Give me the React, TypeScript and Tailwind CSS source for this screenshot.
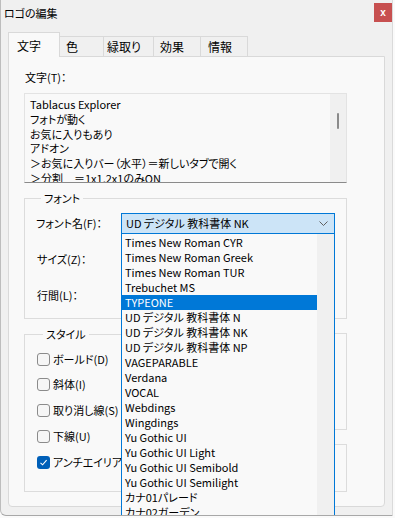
import React from "react";

const items = [
  "Times New Roman CYR",
  "Times New Roman Greek",
  "Times New Roman TUR",
  "Trebuchet MS",
  "TYPEONE",
  "UD デジタル 教科書体 N",
  "UD デジタル 教科書体 NK",
  "UD デジタル 教科書体 NP",
  "VAGEPARABLE",
  "Verdana",
  "VOCAL",
  "Webdings",
  "Wingdings",
  "Yu Gothic UI",
  "Yu Gothic UI Light",
  "Yu Gothic UI Semibold",
  "Yu Gothic UI Semilight",
  "カナ01パレード",
  "カナ02ガーデン",
];

function Checkbox({ checked, label }: { checked?: boolean; label: string }) {
  return (
    <div className="flex h-[16px] items-center whitespace-nowrap">
      {checked ? (
        <span className="flex h-[13px] w-[13px] shrink-0 items-center justify-center rounded-[3px] bg-[#005fb8]">
          <svg width="9" height="9" viewBox="0 0 9 9">
            <path d="M1.5 4.8 L3.6 6.8 L7.6 2.2" fill="none" stroke="#fff" strokeWidth="1.1" />
          </svg>
        </span>
      ) : (
        <span className="h-[13px] w-[13px] shrink-0 rounded-[3px] border border-[#8b8b8b] bg-[#f6f6f6]" />
      )}
      <span className="ml-[3px]">{label}</span>
    </div>
  );
}

export default function App() {
  return (
    <div className="h-[518px] w-[395px] overflow-hidden bg-[#fafafa]">
      <div className="relative h-[516px] w-[393px] overflow-hidden rounded-bl-[6px] border-b border-l border-r border-b-[#a8a8a8] border-l-[#bdbdbd] border-r-[#dadada] bg-[#f0f0f0] text-[11px] leading-[15px] text-black [font-family:'Noto_Sans_CJK_JP',sans-serif] [font-feature-settings:'palt']">
        <div className="flex h-[30px] items-start justify-between">
          <div className="pl-[3px] pt-[6px]">ロゴの編集</div>
          <div className="mt-[3px] flex h-[19px] w-[18px] items-center justify-center bg-[#c75050] text-[10px] font-bold leading-none text-white [font-family:'Liberation_Sans',sans-serif]">
            x
          </div>
        </div>

        {/* tabs */}
        <div className="flex h-[26px] items-end pl-[7px] text-[12px]">
          <div className="relative z-10 -mb-px flex h-[25px] w-[52px] items-start border border-b-0 border-[#d9d9d9] bg-[#f9f9f9] pl-[8px] pt-[5px]">
            文字
          </div>
          <div className="flex h-[20px] w-[44px] items-start border border-b-0 border-l-0 border-[#d9d9d9] bg-[#f0f0f0] pl-[6px] pt-[2px]">
            色
          </div>
          <div className="flex h-[20px] w-[50px] items-start border border-b-0 border-l-0 border-[#d9d9d9] bg-[#f0f0f0] pl-[3px] pt-[2px]">
            緑取り
          </div>
          <div className="flex h-[20px] w-[47px] items-start border border-b-0 border-l-0 border-[#d9d9d9] bg-[#f0f0f0] pl-[6px] pt-[2px]">
            効果
          </div>
          <div className="flex h-[20px] w-[47px] items-start border border-b-0 border-l-0 border-[#d9d9d9] bg-[#f0f0f0] pl-[7px] pt-[2px]">
            情報
          </div>
        </div>

        {/* panel */}
        <div className="ml-[7px] h-[451px] w-[377px] rounded-b-[4px] border border-[#d9d9d9] bg-[#f9f9f9] pl-[15px] pr-[37px] pt-[13px]">
          <div className="h-[16px] pl-[1px]">文字(T)：</div>

          {/* textarea */}
          <div className="mt-[7px] flex h-[90px] border border-[#e3e3e3] border-b-[#8a8a8a] bg-[#f9f9f9]">
            <div className="flex-1 overflow-hidden whitespace-nowrap pl-[5px] pt-[3px] leading-[14.8px]">
              <div>Tablacus Explorer</div>
              <div>フォトが動く</div>
              <div>お気に入りもあり</div>
              <div>アドオン</div>
              <div>＞お気に入りバー（水平）＝新しいタブで開く</div>
              <div>＞分割　＝1x1,2x1のみON</div>
            </div>
            <div className="flex w-[16px] justify-center bg-[#f0f0f0] pt-[19px]">
              <div className="h-[16px] w-[2px] rounded bg-[#8a8a8a]" />
            </div>
          </div>

          {/* font group */}
          <fieldset className="mt-[7px] h-[129px] border border-[#dcdcdc] pl-[10px]">
            <legend className="ml-[6px] px-[3px] leading-[16px]">フォント</legend>
            <div className="mt-[7px] flex h-[21px] items-center">
              <span className="w-[86px] pl-[1px]">フォント名(F)：</span>
              <div className="relative">
                <div className="flex h-[21px] w-[214px] items-center justify-between border border-[#0078d7] bg-[#cce4f7] pl-[4px] pr-[6px]">
                  <span>UD デジタル 教科書体 NK</span>
                  <svg width="9" height="5" viewBox="0 0 9 5">
                    <path d="M0.5 0.5 L4.5 4.5 L8.5 0.5" fill="none" stroke="#606060" strokeWidth="1" />
                  </svg>
                </div>
                {/* dropdown list */}
                <div className="absolute left-0 top-[21px] z-20 flex h-[300px] w-[214px] border-x border-[#0078d7] bg-[#f9f9f9]">
                  <div className="flex-1 whitespace-nowrap pt-[1px]">
                    {items.map((t) => (
                      <div
                        key={t}
                        className={`h-[15px] pl-[3px] leading-[15px] ${
                          t === "TYPEONE" ? "bg-[#0078d7] text-white" : ""
                        }`}
                      >
                        {t}
                      </div>
                    ))}
                  </div>
                  <div className="w-[17px] bg-[#f0f0f0]" />
                </div>
              </div>
            </div>
            <div className="mt-[15px] flex h-[21px] items-center pl-[2px]">サイズ(Z)：</div>
            <div className="mt-[15px] flex h-[21px] items-center pl-[2px]">行間(L)：</div>
          </fieldset>

          {/* style row */}
          <div className="mt-[7px] flex h-[166px] gap-[7px]">
            <fieldset className="h-[166px] w-[161px] border border-[#dcdcdc] pl-[12px]">
              <legend className="ml-[6px] px-[3px] leading-[16px]">スタイル</legend>
              <div className="mt-[9px] flex flex-col gap-[9.8px]">
                <Checkbox label="ボールド(D)" />
                <Checkbox label="斜体(I)" />
                <Checkbox label="取り消し線(S)" />
                <Checkbox label="下線(U)" />
                <Checkbox checked label="アンチエイリアス" />
              </div>
            </fieldset>
            <div className="flex flex-1 flex-col pt-[7px]">
              <div className="h-[97px] border border-[#dcdcdc]" />
              <div className="mt-[14px] h-[48px] border border-[#dcdcdc]" />
            </div>
          </div>
        </div>
      </div>
    </div>
  );
}
